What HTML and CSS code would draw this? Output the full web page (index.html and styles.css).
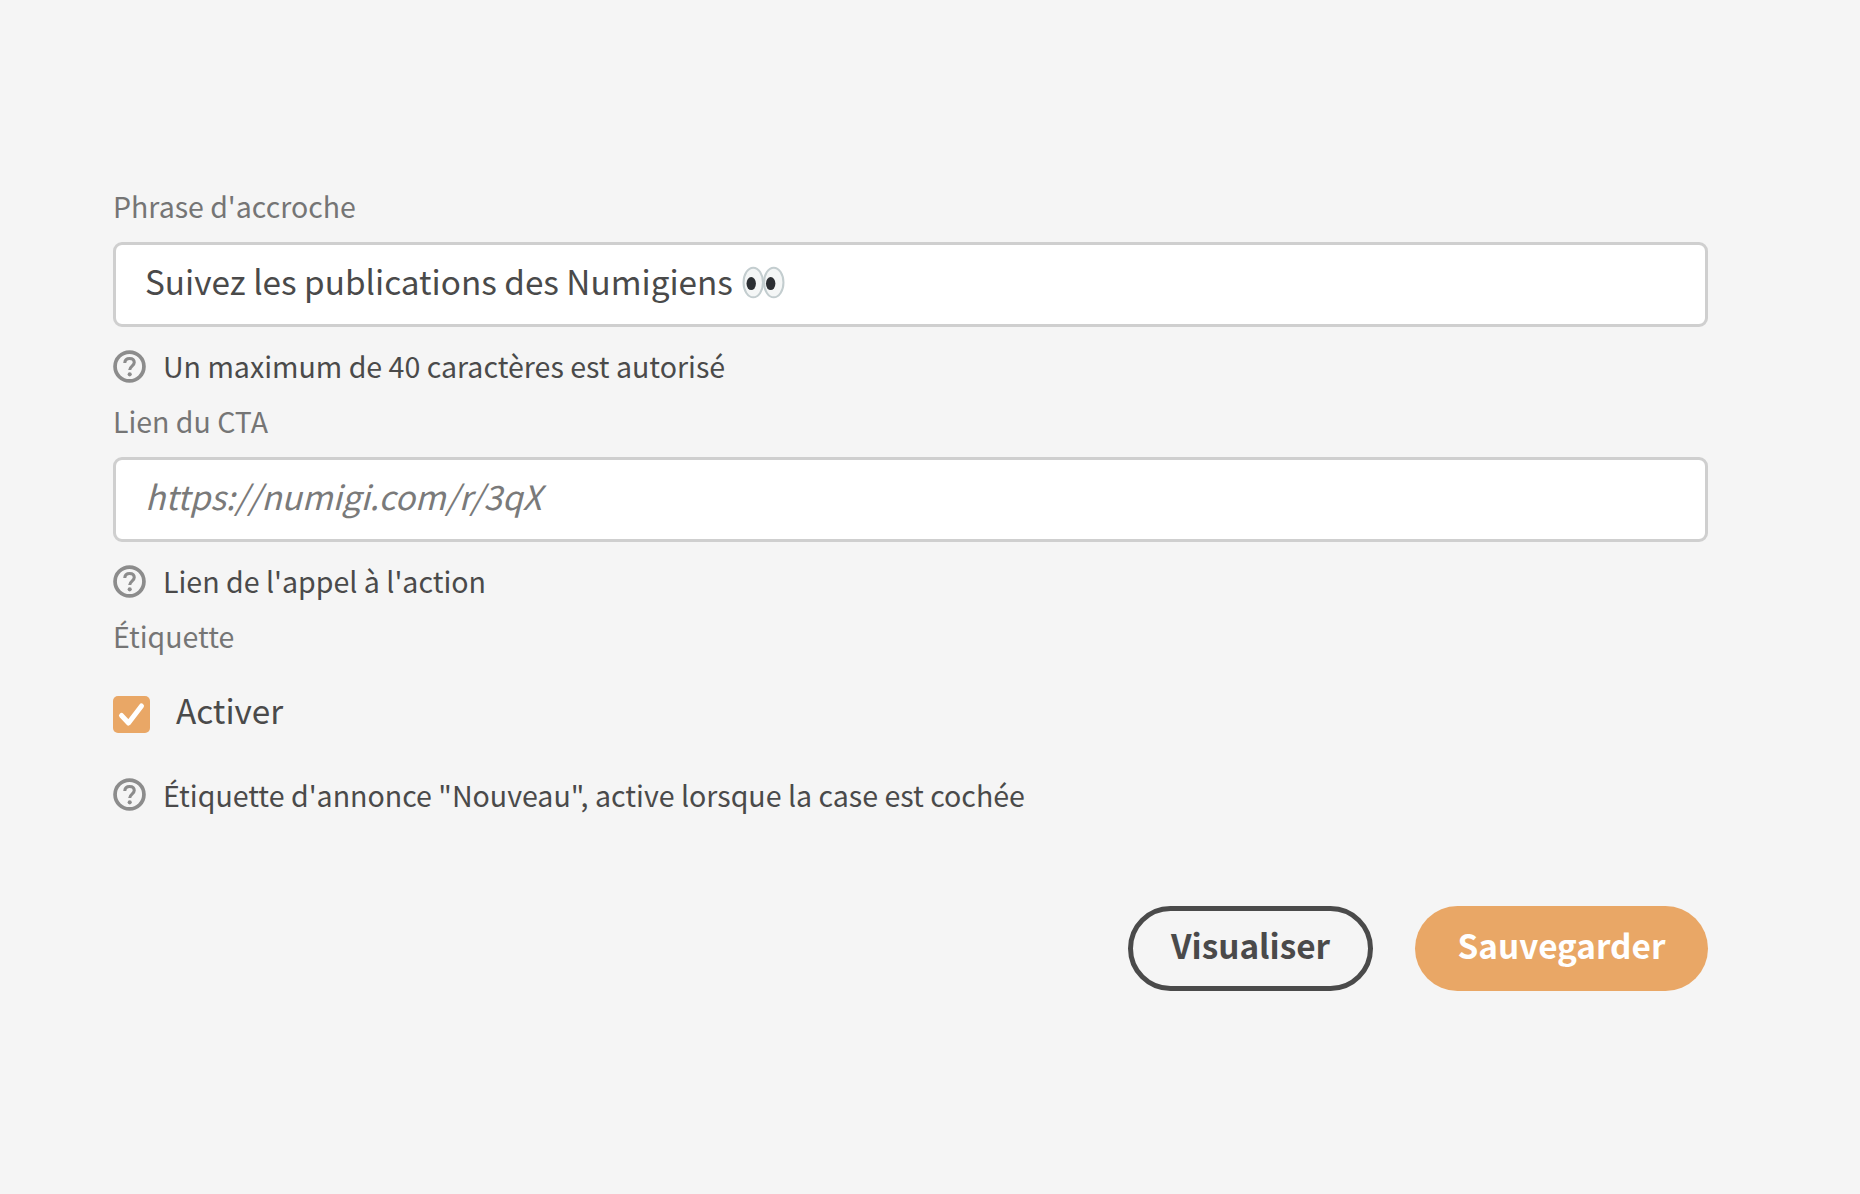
FILE: index.html
```html
<!DOCTYPE html>
<html lang="fr">
<head>
<meta charset="utf-8">
<title>Formulaire</title>
<link rel="stylesheet" href="styles.css">
</head>
<body>
<form class="form">
  <div class="field">
    <div class="label">Phrase d'accroche</div>
    <div class="input"><span>Suivez les publications des Numigiens</span>
      <svg class="eyes" viewBox="0 0 42 32"><ellipse cx="11" cy="16" rx="9.5" ry="14.5" fill="#f4f6f6" stroke="#c3cdcf" stroke-width="2"/><ellipse cx="31" cy="16" rx="9.5" ry="14.5" fill="#f4f6f6" stroke="#c3cdcf" stroke-width="2"/><ellipse cx="9" cy="17" rx="4.6" ry="6.4" fill="#2c2f33"/><ellipse cx="28" cy="17" rx="4.6" ry="6.4" fill="#2c2f33"/></svg>
    </div>
    <div class="help"><svg class="q" viewBox="0 0 32 32"><circle cx="16" cy="16" r="14" fill="none" stroke="#8c8c8c" stroke-width="3.6"/><path d="M11.4 12.6c.2-2.8 2-4.3 4.7-4.3 2.7 0 4.5 1.5 4.5 3.9 0 3.4-4.4 3.6-4.4 7.2" fill="none" stroke="#8c8c8c" stroke-width="3"/><circle cx="16.2" cy="23.6" r="2" fill="#8c8c8c"/></svg><span>Un maximum de 40 caractères est autorisé</span></div>
  </div>
  <div class="field">
    <div class="label">Lien du CTA</div>
    <div class="input placeholder"><span>https://numigi.com/r/3qX</span></div>
    <div class="help"><svg class="q" viewBox="0 0 32 32"><circle cx="16" cy="16" r="14" fill="none" stroke="#8c8c8c" stroke-width="3.6"/><path d="M11.4 12.6c.2-2.8 2-4.3 4.7-4.3 2.7 0 4.5 1.5 4.5 3.9 0 3.4-4.4 3.6-4.4 7.2" fill="none" stroke="#8c8c8c" stroke-width="3"/><circle cx="16.2" cy="23.6" r="2" fill="#8c8c8c"/></svg><span>Lien de l'appel à l'action</span></div>
  </div>
  <div class="field">
    <div class="label">Étiquette</div>
    <div class="check-row">
      <span class="box"><svg viewBox="0 0 37 37"><path d="M8.5 19.5l7 7.5L28.5 10" fill="none" stroke="#fff" stroke-width="5" stroke-linecap="round" stroke-linejoin="round"/></svg></span>
      <span class="check-label">Activer</span>
    </div>
    <div class="help"><svg class="q" viewBox="0 0 32 32"><circle cx="16" cy="16" r="14" fill="none" stroke="#8c8c8c" stroke-width="3.6"/><path d="M11.4 12.6c.2-2.8 2-4.3 4.7-4.3 2.7 0 4.5 1.5 4.5 3.9 0 3.4-4.4 3.6-4.4 7.2" fill="none" stroke="#8c8c8c" stroke-width="3"/><circle cx="16.2" cy="23.6" r="2" fill="#8c8c8c"/></svg><span>Étiquette d'annonce "Nouveau", active lorsque la case est cochée</span></div>
  </div>
  <div class="actions">
    <button type="button" class="btn btn-outline">Visualiser</button>
    <button type="button" class="btn btn-primary">Sauvegarder</button>
  </div>
</form>
</body>
</html>
```
FILE: styles.css
```css
* { box-sizing: border-box; }
html, body { margin: 0; height: 100%; }
body {
  background: #f5f5f5;
  font-family: "Noto Sans CJK JP", "Noto Sans", sans-serif;
  color: #4a4a4a;
}
.form {
  width: 1595px;
  margin-left: 113px;
  padding-top: 187.5px;
  display: flex;
  flex-direction: column;
}
.field { display: flex; flex-direction: column; }
.label {
  font-size: 28.5px;
  line-height: 36px;
  color: #757575;
  margin-bottom: 18.5px;
}
.input {
  height: 85px;
  background: #fff;
  border: 3px solid #cfcfcf;
  border-radius: 9px;
  padding: 0 29px 8px;
  display: flex;
  align-items: center;
  gap: 9px;
  font-size: 33.3px;
  color: #4a4a4a;
}
.placeholder { font-style: italic; color: #7a7a7a; }
.eyes { width: 43px; height: 33px; flex: none; margin-top: 3px; }
.help {
  display: flex;
  align-items: center;
  gap: 17px;
  height: 36px;
  margin-top: 21px;
  margin-bottom: 18.5px;
  font-size: 28.57px;
  line-height: 36px;
  color: #4a4a4a;
}
.q { width: 33px; height: 33px; flex: none; }
.check-row {
  display: flex;
  align-items: center;
  gap: 26px;
  height: 37px;
  margin-top: 23.5px;
  margin-bottom: 23px;
}
.box {
  width: 37px;
  height: 37px;
  background: #e9a766;
  border-radius: 5px;
  display: flex;
}
.box svg { width: 37px; height: 37px; }
.check-label { font-size: 33.3px; line-height: 44px; color: #4a4a4a; margin-bottom: 8px; }
.actions {
  display: flex;
  justify-content: flex-end;
  gap: 42px;
  margin-top: 74.5px;
}
.btn {
  height: 85px;
  border-radius: 43px;
  font-family: inherit;
  font-size: 33.3px;
  font-weight: 700;
  padding: 0 0 7px;
  cursor: pointer;
}
.btn-outline {
  width: 245px;
  background: transparent;
  border: 5px solid #4a4a4a;
  color: #4a4a4a;
}
.btn-primary {
  width: 293px;
  background: #e9a766;
  border: 0;
  color: #fff;
}
```
